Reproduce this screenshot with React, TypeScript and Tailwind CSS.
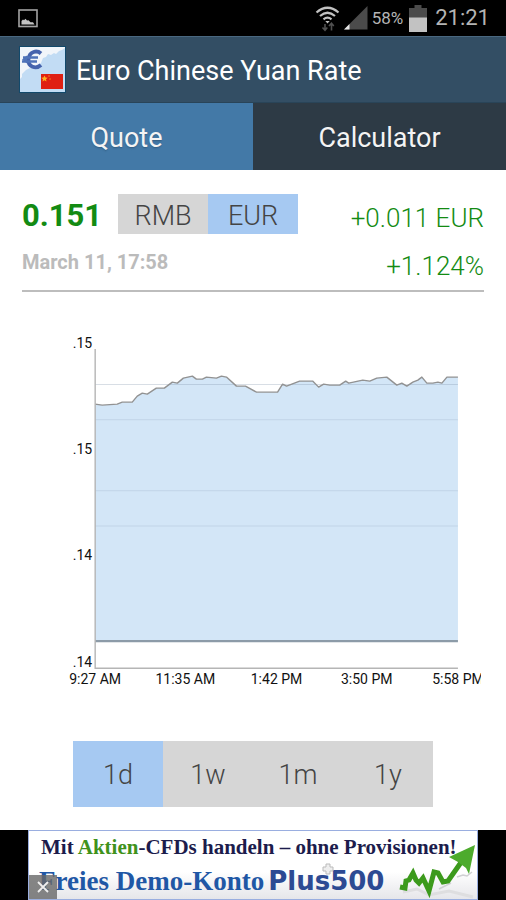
import { useState } from 'react';

const PERIODS = ['1d', '1w', '1m', '1y'];
const CURRENCIES = ['RMB', 'EUR'];

const Y_LABELS = [
  { text: '.15', y: 18 },
  { text: '.15', y: 124 },
  { text: '.14', y: 230 },
  { text: '.14', y: 336 },
];

const X_LABELS = [
  { text: '9:27 AM', x: 73 },
  { text: '11:35 AM', x: 163 },
  { text: '1:42 PM', x: 254 },
  { text: '3:50 PM', x: 344 },
  { text: '5:58 PM', x: 435 },
];

const GRID = [54, 89, 160, 195];

const RATE_LINE =
  '73,74 80,75 95,74 100,72 110,72 115,66 120,63 125,64 134,58 142,58 150,52 155,53 161,48 170,46 174,49 180,49 184,47 194,48 199,46 204,47 214,56 223,56 234,62 255,62 260,54 264,56 277,51 290,51 296,57 301,54 307,55 317,55 323,51 326,53 340,50 347,51 354,48 364,47 374,55 379,53 384,56 390,52 395,50 399,47 404,53 410,53 415,52 419,53 424,47 435,47';

function StatusBar() {
  return (
    <div className="flex h-9 items-center bg-black px-4 text-[#b4b4b4]">
      <svg className="ml-0.5 h-[19px] w-5" viewBox="0 0 20 19">
        <rect x="1" y="1" width="18" height="16.5" fill="none" stroke="#a3a3a3" strokeWidth="1.6" />
        <path d="M3.500 15.500v-3.500l1.500-1.500 1 .8 1.500-1.600 1.500 1.800 1.500-.3 2 2h2.500l1.500 2.300z" fill="#c4c4c4" />
      </svg>
      <div className="ml-auto flex items-center">
        <svg className="h-[27px] w-[25px]" viewBox="0 0 25 27" fill="none" stroke="#c2c2c2" strokeWidth="2.2">
          <path d="M1.500 7.500Q12.500-2 23.500 7.500" />
          <path d="M5 11Q12.500 4.500 20 11" />
          <path d="M8.500 14.300Q12.500 11 16.500 14.300" />
          <path d="M10.300 16h4.400l-2.200 2.500z" fill="#c2c2c2" stroke="none" />
          <path d="M10 19v6M7.500 22.500l2.500 2.700 2.300-2.700M16.500 25.500v-7M14 21l2.500-2.700 2.300 2.700" stroke="#505050" strokeWidth="1.6" />
        </svg>
        <svg className="ml-1 h-6 w-6" viewBox="0 0 24 24">
          <path d="M23.500 0v23.500H0z" fill="#4b4b4b" />
          <path d="M5.500 18v5.500H0z" fill="#e5e5e5" />
        </svg>
        <span className="ml-1 text-[17px] leading-6">58%</span>
        <svg className="ml-1.5 h-[27px] w-[18px]" viewBox="0 0 18 27">
          <path d="M5.500 0h7v3H18v10H0V3h5.500z" fill="#4b4b4b" />
          <path d="M0 12.500h18V27H0z" fill="#c2c2c2" />
        </svg>
        <span className="ml-2 text-[22px] leading-6">21:21</span>
      </div>
    </div>
  );
}

function AppIcon() {
  return (
    <svg className="h-[47px] w-[47px]" viewBox="0 0 47 47">
      <rect width="47" height="47" fill="#12496b" />
      <rect x="1" y="1" width="45" height="45" fill="#f1f5fa" />
      <path d="M1 33l2-2V28l4-4 4-2 4 1 3-3 4-3 2-5 3-1 2-3 3 1 3-2 2 1 3-3 3-1 3-2v44H1z" fill="#c2dcf4" />
      <path d="M22 7.500C18 4 10.500 5 9.500 13S17 23.500 22 19" fill="none" stroke="#4563ad" strokeWidth="3.8" />
      <path d="M4 11.500h15M3 15.500h15" stroke="#4f73b9" strokeWidth="2.4" />
      <path d="M3 13.500l5-4v8z" fill="#4f73b9" />
      <rect x="22" y="28" width="22" height="15" fill="#df2013" />
      <path d="M25.500 29.500l1 2 2.200.2-1.700 1.500.5 2.200-2-1.200-2 1.200.5-2.200-1.700-1.500 2.200-.2z" fill="#ffb020" />
      <circle cx="30" cy="30" r=".7" fill="#ff9a1e" />
      <circle cx="31" cy="33" r=".7" fill="#ff9a1e" />
    </svg>
  );
}

function RateChart() {
  return (
    <svg className="mt-[38px] block w-full" viewBox="0 0 461 360" role="img" aria-label="Rate today">
      <clipPath id="plot">
        <rect width="458" height="360" />
      </clipPath>
      <polygon points={`73,310 ${RATE_LINE} 435,310`} fill="#d3e6f7" />
      {GRID.map(y => (
        <path key={y} d={`M73 ${y + 0.5}H435`} stroke="#7f93a8" strokeOpacity={y === 54 ? 0.3 : 0.2} />
      ))}
      <polyline points={RATE_LINE} fill="none" stroke="#929292" strokeWidth="1.4" strokeLinejoin="round" />
      <path d="M73 310.500H435" stroke="#8c9ba8" strokeWidth="2.4" />
      <path d="M73 19V337.500H435" fill="none" stroke="#b5b5b5" strokeWidth="1.4" />
      <g className="text-sm" fill="#111" clipPath="url(#plot)">
        {Y_LABELS.map(l => (
          <text key={l.y} x="70" y={l.y} textAnchor="end">{l.text}</text>
        ))}
        {X_LABELS.map(l => (
          <text key={l.x} x={l.x} y="353" textAnchor="middle">{l.text}</text>
        ))}
      </g>
    </svg>
  );
}

function AdBanner() {
  return (
    <div className="bg-black px-7">
      <div className="relative h-[70px] border border-[#9aaee0] bg-linear-to-b from-white from-60% to-[#e6e6ea]">
        <a href="#ad" className="block whitespace-nowrap pl-3 font-['Liberation_Serif',serif] font-bold">
          <span className="block text-[21px] leading-8 text-[#1c1c4c]">
            Mit <span className="text-[#3f921c]">Aktien</span>-CFDs handeln – ohne Provisionen!
          </span>
          <span className="flex items-center text-[#1f57a5]">
            <span className="-ml-0.5 text-[27px] leading-9">Freies Demo-Konto</span>
            <span className="ml-1 font-['DejaVu_Sans',sans-serif] text-[26px] leading-9 text-[#2c4a93]">Plus500</span>
          </span>
        </a>
        <svg className="absolute right-0 bottom-0 h-[54px] w-[78px]" viewBox="0 0 78 54">
          <path d="M40 44l12-6M58 32l6-2 4 1 5-4" fill="none" stroke="#d0d0d3" strokeWidth="1.5" />
          <path d="M4 47l14-3 12 6 20-4 24 6" fill="none" stroke="#dedee0" strokeWidth="3" />
          <path d="M1 42l5 1 1-7 3-1 4-7 3 7 3 3 4-5 6 13 5-19 4 1 5 9 5-1 14-20" fill="none" stroke="#3c9a1c" strokeWidth="5" />
          <path d="M76 0L50 12l9 5 8 6 3 6z" fill="#4dab2d" />
        </svg>
        <svg className="absolute top-8 left-[293px] size-3" viewBox="0 0 12 12">
          <path d="M4 4V1h4v3h3v4H8v3H4V8H1V4z" fill="#eee" stroke="#bbb" />
        </svg>
        <button type="button" aria-label="Close" className="absolute bottom-0 left-0 flex h-6 w-7 items-center justify-center bg-[#686868]/80">
          <svg className="size-3" viewBox="0 0 12 12">
            <path d="M1 1l10 10M11 1L1 11" stroke="#eee" strokeWidth="1.8" />
          </svg>
        </button>
      </div>
    </div>
  );
}

export default function App() {
  const [tab, setTab] = useState('Quote');
  const [currency, setCurrency] = useState('EUR');
  const [period, setPeriod] = useState('1d');

  return (
    <div className="flex min-h-screen flex-col bg-white font-[Roboto,sans-serif]">
      <StatusBar />

      <header className="flex h-[66px] items-center gap-2.5 border-t border-[#4a6880] bg-[#334e64] px-[19px]">
        <AppIcon />
        <h1 className="pt-0.5 text-[27px] leading-8 text-white">Euro Chinese Yuan Rate</h1>
      </header>

      <nav className="grid h-[68px] grid-cols-2 border-t border-[#294458]">
        {['Quote', 'Calculator'].map(t => (
          <button
            key={t}
            type="button"
            onClick={() => setTab(t)}
            className={`pt-0.5 text-[27px] leading-8 text-[#f4f4f4] text-shadow-sm ${tab === t ? 'bg-[#4379a7]' : 'bg-[#2d3a45]'}`}
          >
            {t}
          </button>
        ))}
      </nav>

      <main className="px-[22px] pt-6">
        {/* Current rate */}
        <div className="flex items-start justify-between border-b-2 border-[#bdbdbd] text-[#138b13]">
          <div>
            <div className="flex items-start gap-4">
              <span className="pt-0.5 text-[31px] leading-10 font-bold">0.151</span>
              <div className="flex">
                {CURRENCIES.map(c => (
                  <button
                    key={c}
                    type="button"
                    onClick={() => setCurrency(c)}
                    className={`h-10 w-[90px] pt-0.5 text-[27px] font-light text-[#444] ${currency === c ? 'bg-[#a6c9f2]' : 'bg-[#d6d6d6]'}`}
                  >
                    {c}
                  </button>
                ))}
              </div>
            </div>
            <div className="mt-3 text-xl leading-7 font-bold text-[#bbb]">March 11, 17:58</div>
          </div>
          <div className="text-right text-[26px] leading-[48px] font-light">
            <div>+0.011 EUR</div>
            <div>+1.124%</div>
          </div>
        </div>

        <RateChart />

        <div className="mx-[51px] mt-[50px] grid h-[66px] grid-cols-4 text-[27px] font-light text-[#444]">
          {PERIODS.map(p => (
            <button
              key={p}
              type="button"
              onClick={() => setPeriod(p)}
              className={`pt-0.5 ${period === p ? 'bg-[#a6c9f2]' : 'bg-[#d6d6d6]'}`}
            >
              {p}
            </button>
          ))}
        </div>
      </main>

      <div className="mt-auto">
        <AdBanner />
      </div>
    </div>
  );
}
